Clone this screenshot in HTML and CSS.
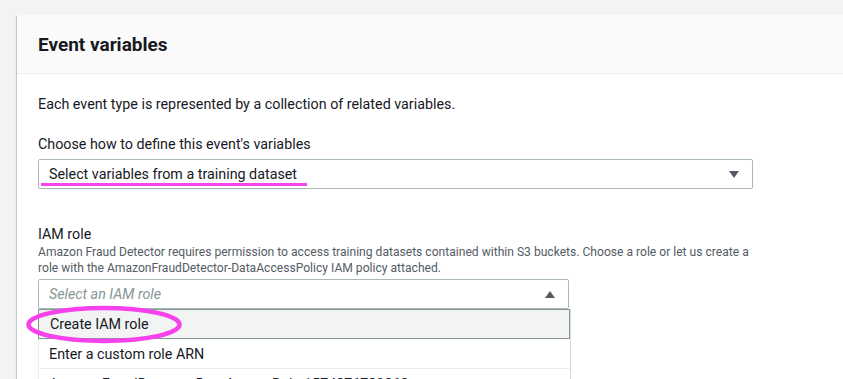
FILE: index.html
```html
<!DOCTYPE html>
<html lang="en">
<head>
    <meta charset="UTF-8">
    <meta name="viewport" content="width=device-width, initial-scale=1.0">
    <title>Event variables</title>
    <link rel="stylesheet" href="styles.css">
</head>
<body>
    <div class="card">
        <div class="card-header">
            <h2>Event variables</h2>
        </div>
        <div class="card-body">
            <p class="intro">Each event type is represented by a collection of related variables.</p>

            <label class="label">Choose how to define this event's variables</label>
            <div class="select select-wide">
                <span class="select-value">Select variables from a training dataset</span>
                <svg class="caret" width="10" height="7" viewBox="0 0 10 7"><path d="M0 0h10L5 7z" fill="#545b64"/></svg>
                <span class="mark-underline"></span>
            </div>

            <label class="label label-iam">IAM role</label>
            <p class="hint">Amazon Fraud Detector requires permission to access training datasets contained within S3 buckets. Choose a role or let us create a role with the AmazonFraudDetector-DataAccessPolicy IAM policy attached.</p>
            <div class="select-wrap">
                <div class="select select-narrow">
                    <span class="placeholder">Select an IAM role</span>
                    <svg class="caret" width="10" height="7" viewBox="0 0 10 7"><path d="M0 7h10L5 0z" fill="#545b64"/></svg>
                </div>
                <ul class="dropdown">
                    <li class="option highlighted">Create IAM role</li>
                    <li class="option">Enter a custom role ARN</li>
                    <li class="option">AmazonFraudDetector-DataAccessRole-1574876789868</li>
                </ul>
                <svg class="mark-ellipse" width="160" height="42" viewBox="0 0 160 42">
                    <ellipse cx="79" cy="20.5" rx="75.5" ry="16.5" fill="none" stroke="#f542ec" stroke-width="4.5"/>
                </svg>
            </div>
        </div>
    </div>
</body>
</html>
```

FILE: styles.css
```css
body {
    margin: 0;
    padding: 15px 0 0 17px;
    background: #f2f3f3;
    font-family: Roboto, "Liberation Sans", Arial, sans-serif;
    color: #16191f;
    overflow: hidden;
    height: 379px;
    box-sizing: border-box;
}
.card {
    width: 900px;
    min-height: 400px;
    background: white;
    box-shadow: 0 1px 1px 0 rgba(0, 28, 36, 0.3), -1px 1px 1px 0 rgba(0, 28, 36, 0.15);
}
.card-header {
    height: 58px;
    display: flex;
    align-items: center;
    padding-left: 21px;
    background: #fafafa;
    border-bottom: 1px solid #eaeded;
}
.card-header h2 {
    margin: 0;
    font-size: 19px;
    font-weight: 700;
}
.card-body {
    padding: 20px 0 0 21px;
}
.intro {
    margin: 0 0 20px;
    font-size: 14.3px;
    line-height: 20px;
}
.label {
    display: block;
    font-size: 14.3px;
    line-height: 20px;
    margin-bottom: 5px;
}
.label-iam {
    margin-top: 35px;
    margin-bottom: 0;
}
.hint {
    margin: 0 0 3px;
    width: 716px;
    font-size: 12.1px;
    line-height: 16px;
    color: #545b64;
}
.select {
    position: relative;
    box-sizing: border-box;
    height: 30px;
    display: flex;
    align-items: center;
    justify-content: space-between;
    padding: 0 13px 0 10px;
    border: 1px solid #aab7b8;
    border-radius: 2px;
    background: white;
    font-size: 14.3px;
}
.select-wide {
    width: 715px;
}
.select-narrow {
    width: 531px;
}
.placeholder {
    color: #879596;
    font-style: italic;
}
.select-wrap {
    position: relative;
    width: 531px;
}
.dropdown {
    position: absolute;
    top: 30px;
    left: 0;
    width: 533px;
    margin: 0;
    padding: 0;
    list-style: none;
    box-sizing: border-box;
    border-left: 1px solid #eaeded;
    border-right: 1px solid #d5dbdb;
    background: white;
    font-size: 14.3px;
}
.option {
    height: 30px;
    box-sizing: border-box;
    display: flex;
    align-items: center;
    padding-left: 10px;
    border-bottom: 1px solid #eaeded;
}
.option.highlighted {
    margin-left: -1px;
    width: 532px;
    padding-left: 11px;
    background: #f2f3f3;
    border: 1px solid #879596;
}
.mark-underline {
    position: absolute;
    left: 2px;
    top: 23px;
    width: 266px;
    height: 3px;
    background: #f745ee;
}
.mark-ellipse {
    position: absolute;
    left: -13px;
    top: 25px;
}
```
